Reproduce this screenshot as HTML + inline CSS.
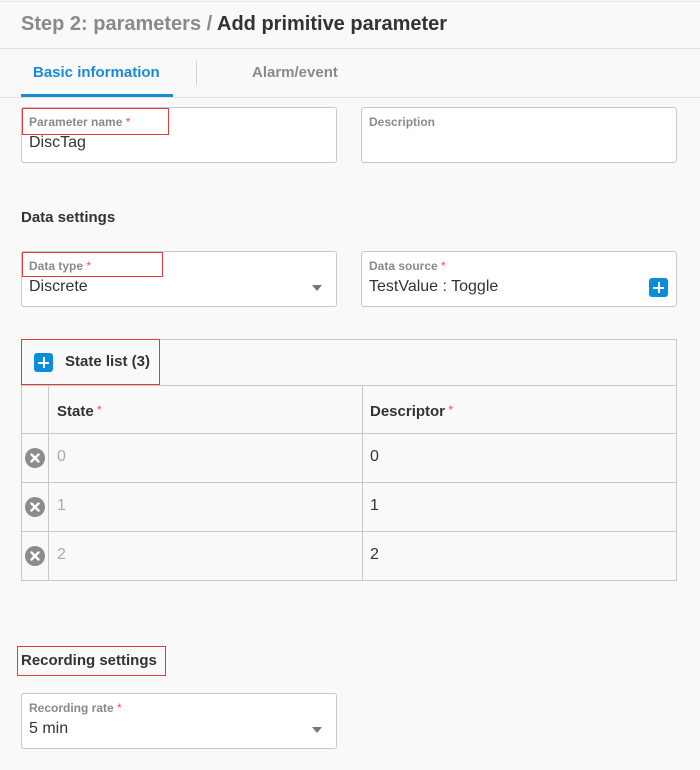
<!DOCTYPE html>
<html><head><style>
*{box-sizing:border-box;margin:0;padding:0}
body{width:700px;height:770px;background:#f9f9f9;font-family:"Liberation Sans",sans-serif;position:relative;overflow:hidden;color:#333}
.a{position:absolute}
.box{position:absolute;border:1px solid #c8c8c8;border-radius:3px;background:#fff}
.lbl{position:absolute;left:7px;top:7px;font-size:12px;font-weight:bold;color:#8a8a8a}
.lbl b{color:#f05050;font-weight:normal}
.val{position:absolute;left:7px;font-size:16px;color:#333}
.red{position:absolute;border:1px solid #e53935}
.plus{position:absolute;width:19px;height:19px;background:#0a8ddb;border-radius:3px}
.plus:before{content:"";position:absolute;left:4px;top:8.5px;width:11px;height:2px;background:#fff}
.plus:after{content:"";position:absolute;left:8.5px;top:4px;width:2px;height:11px;background:#fff}
.caret{position:absolute;right:14px;top:33px;width:0;height:0;border-left:5px solid transparent;border-right:5px solid transparent;border-top:6px solid #777}
.x{position:absolute;width:20px;height:20px}
.hl{position:absolute;height:1px;background:#c8c8c8}
.vl{position:absolute;width:1px;background:#c8c8c8}
</style></head><body>
<div class="hl" style="left:0;top:1px;width:700px;background:#e8e8e8"></div>
<div class="a" style="left:21px;top:13px;font-size:20px;font-weight:bold;color:#8a8a8a">Step 2: parameters / <span style="color:#333">Add primitive parameter</span></div>
<div class="hl" style="left:0;top:48px;width:700px;background:#e0e0e0"></div>
<div class="a" style="left:33px;top:64px;font-size:15px;font-weight:bold;color:#1a8ad6">Basic information</div>
<div class="a" style="left:21px;top:94px;width:152px;height:3px;background:#1a8ad6"></div>
<div class="vl" style="left:196px;top:61px;height:24px;background:#d0d0d0"></div>
<div class="a" style="left:252px;top:64px;font-size:15px;font-weight:bold;color:#8a8a8a">Alarm/event</div>
<div class="hl" style="left:0;top:97px;width:700px;background:#e0e0e0"></div>

<div class="box" style="left:21px;top:107px;width:316px;height:56px"><div class="lbl">Parameter name <b>*</b></div><div class="val" style="top:26px">DiscTag</div></div>
<div class="red" style="left:22px;top:108px;width:147px;height:27px"></div>
<div class="box" style="left:361px;top:107px;width:316px;height:56px"><div class="lbl">Description</div></div>

<div class="a" style="left:21px;top:209px;font-size:15px;font-weight:bold">Data settings</div>
<div class="box" style="left:21px;top:251px;width:316px;height:56px"><div class="lbl">Data type <b>*</b></div><div class="val" style="top:26px">Discrete</div><div class="caret"></div></div>
<div class="red" style="left:22px;top:252px;width:141px;height:25px"></div>
<div class="box" style="left:361px;top:251px;width:316px;height:56px"><div class="lbl">Data source <b>*</b></div><div class="val" style="top:26px">TestValue : Toggle</div><div class="plus" style="left:287px;top:26px"></div></div>

<div class="a" style="left:21px;top:339px;width:656px;height:242px;border:1px solid #c8c8c8;background:#f9f9f9"></div>
<div class="plus" style="left:34px;top:353px"></div>
<div class="a" style="left:65px;top:353px;font-size:15px;font-weight:bold">State list (3)</div>
<div class="red" style="left:21px;top:339px;width:139px;height:46px"></div>
<div class="hl" style="left:21px;top:385px;width:656px"></div>
<div class="hl" style="left:21px;top:433px;width:656px"></div>
<div class="hl" style="left:21px;top:482px;width:656px"></div>
<div class="hl" style="left:21px;top:531px;width:656px"></div>
<div class="vl" style="left:48px;top:385px;height:196px"></div>
<div class="vl" style="left:362px;top:385px;height:196px"></div>
<div class="a" style="left:57px;top:403px;font-size:15px;font-weight:bold">State<span style="color:#f05050;font-weight:normal;font-size:12px;vertical-align:top"> *</span></div>
<div class="a" style="left:370px;top:403px;font-size:15px;font-weight:bold">Descriptor<span style="color:#f05050;font-weight:normal;font-size:12px;vertical-align:top"> *</span></div>
<svg class="x" style="left:25px;top:448px" viewBox="0 0 20 20"><circle cx="10" cy="10" r="10" fill="#8c8c8c"/><path d="M6.5 6.5L13.5 13.5M13.5 6.5L6.5 13.5" stroke="#fff" stroke-width="2.4" stroke-linecap="round"/></svg>
<svg class="x" style="left:25px;top:497px" viewBox="0 0 20 20"><circle cx="10" cy="10" r="10" fill="#8c8c8c"/><path d="M6.5 6.5L13.5 13.5M13.5 6.5L6.5 13.5" stroke="#fff" stroke-width="2.4" stroke-linecap="round"/></svg>
<svg class="x" style="left:25px;top:546px" viewBox="0 0 20 20"><circle cx="10" cy="10" r="10" fill="#8c8c8c"/><path d="M6.5 6.5L13.5 13.5M13.5 6.5L6.5 13.5" stroke="#fff" stroke-width="2.4" stroke-linecap="round"/></svg>
<div class="a" style="left:57px;top:448px;font-size:16px;color:#aaa">0</div>
<div class="a" style="left:57px;top:497px;font-size:16px;color:#aaa">1</div>
<div class="a" style="left:57px;top:546px;font-size:16px;color:#aaa">2</div>
<div class="a" style="left:370px;top:448px;font-size:16px">0</div>
<div class="a" style="left:370px;top:497px;font-size:16px">1</div>
<div class="a" style="left:370px;top:546px;font-size:16px">2</div>

<div class="a" style="left:21px;top:652px;font-size:15px;font-weight:bold">Recording settings</div>
<div class="red" style="left:17px;top:646px;width:149px;height:30px"></div>
<div class="box" style="left:21px;top:693px;width:316px;height:56px"><div class="lbl">Recording rate <b>*</b></div><div class="val" style="top:26px">5 min</div><div class="caret"></div></div>
</body></html>
